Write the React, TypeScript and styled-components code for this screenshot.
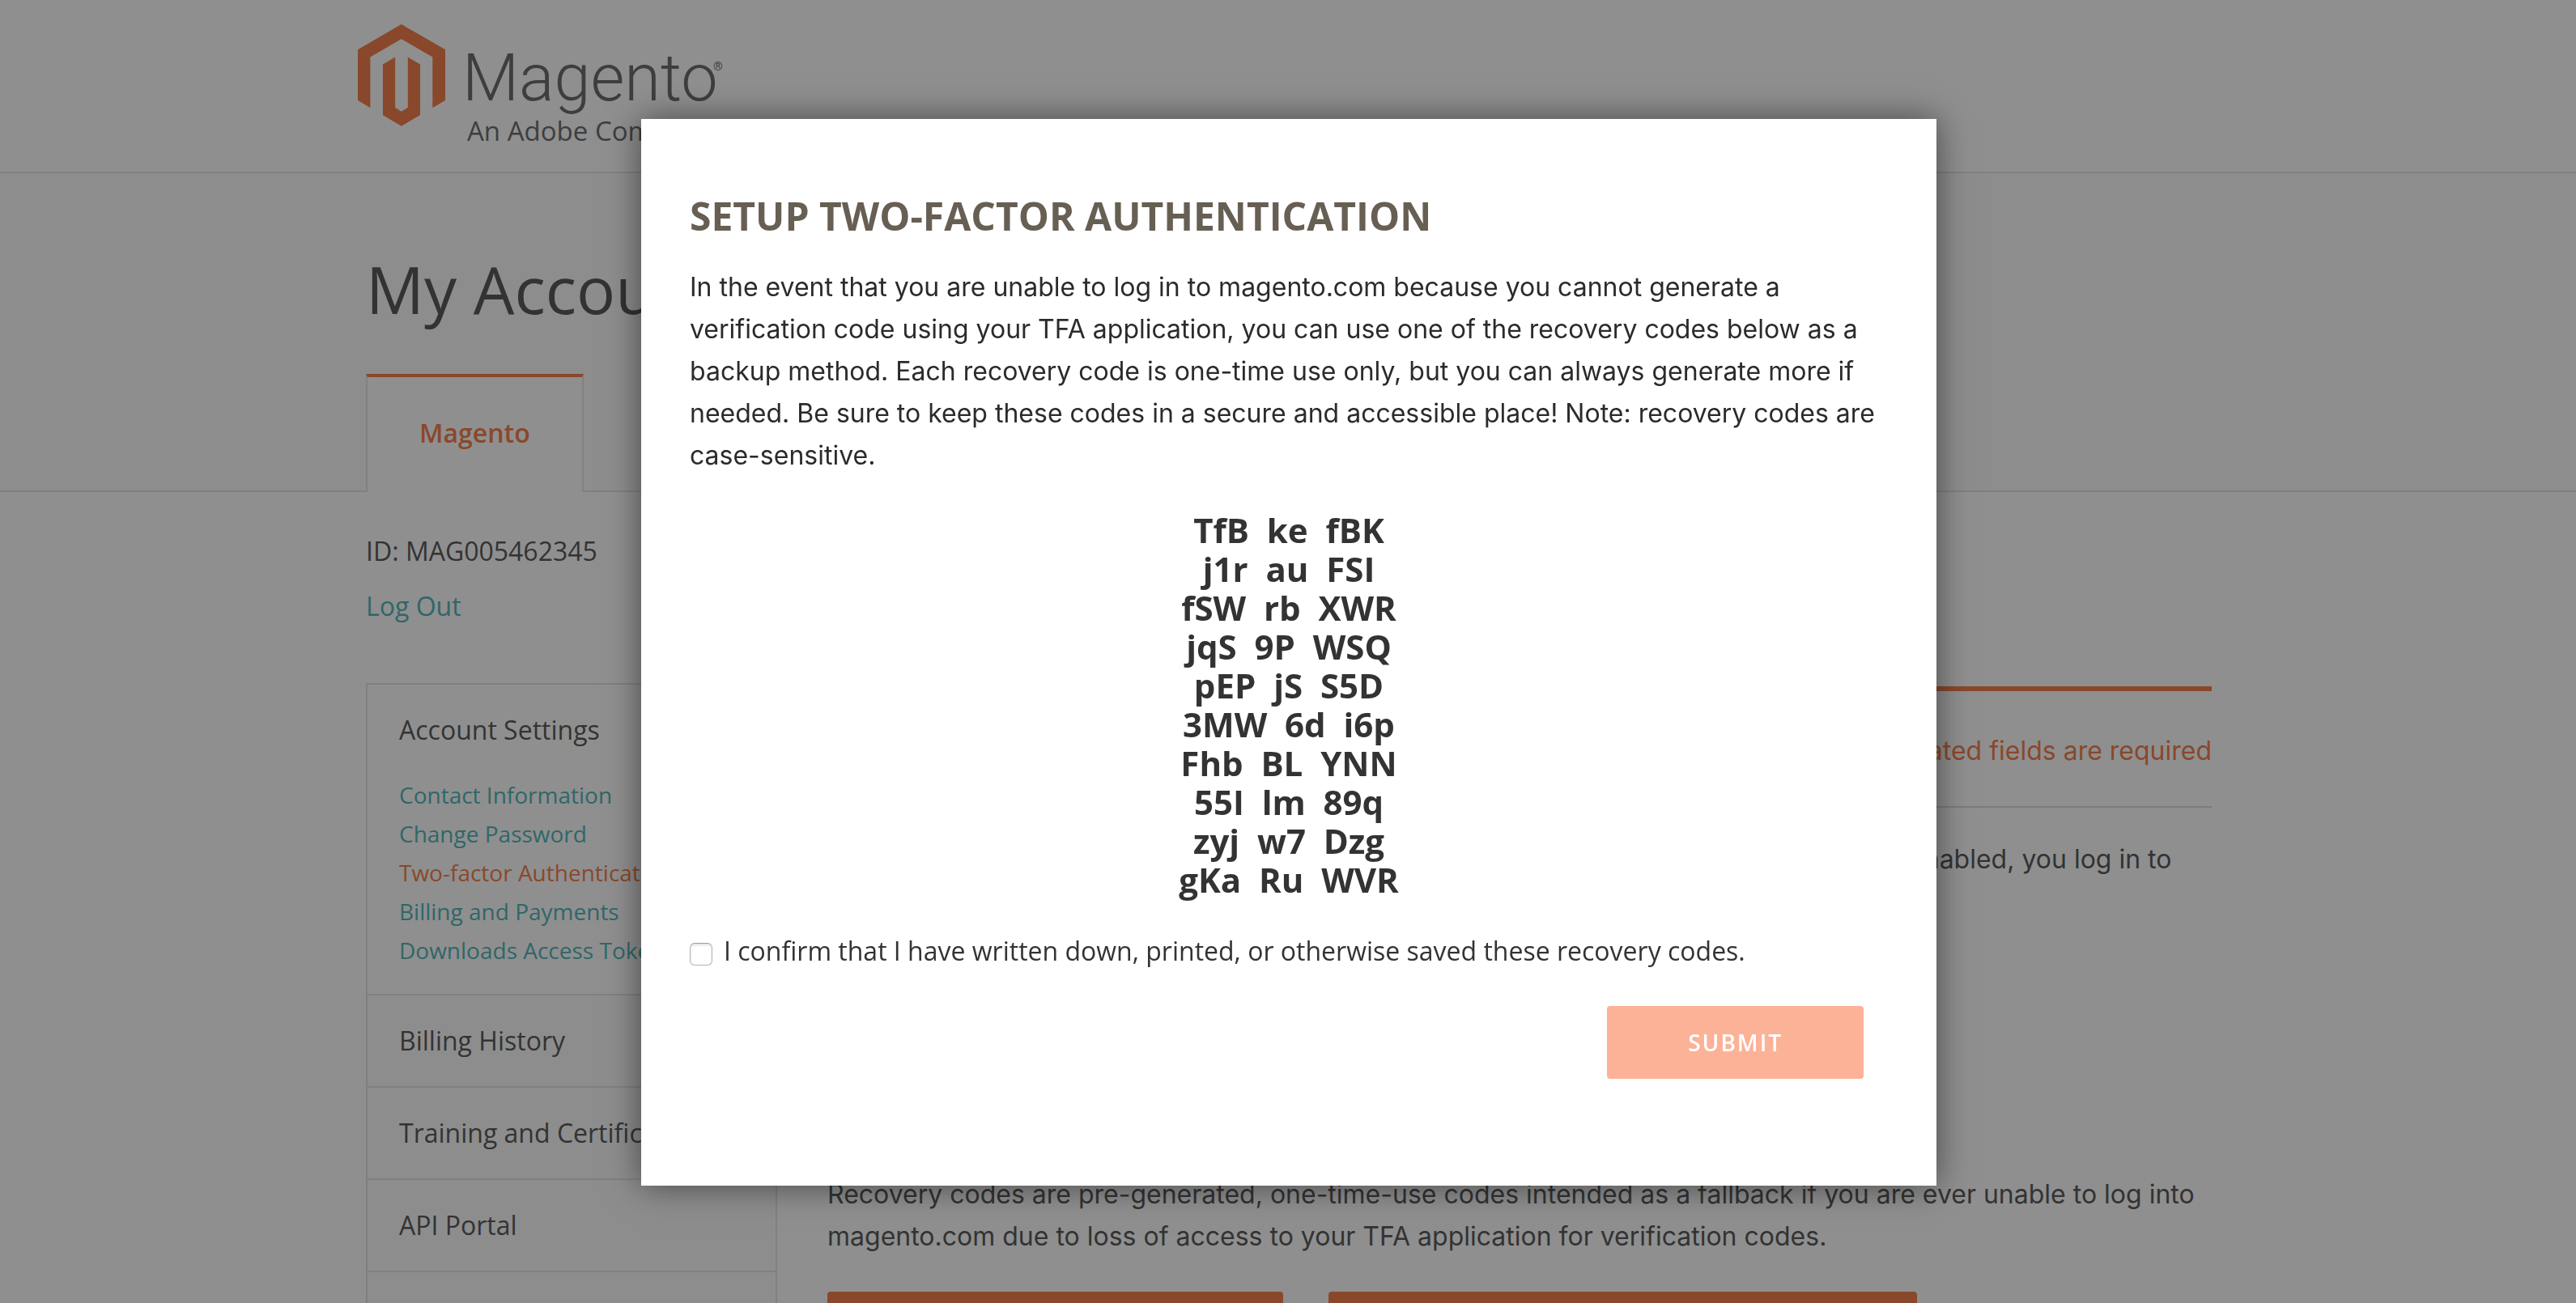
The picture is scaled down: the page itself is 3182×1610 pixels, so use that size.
import React, { useState } from "react";
import styled, { createGlobalStyle } from "styled-components";

const color = {
  orange: "#f26322",
  teal: "#2aa6aa",
  ink: "#333333",
  line: "#dedede",
  panel: "#fafafa",
};

const display = `"Open Sans", "Noto Sans", sans-serif`;
const copy = `Inter, "Liberation Sans", sans-serif`;

const GlobalStyle = createGlobalStyle`
  *, *::before, *::after { box-sizing: border-box; }
  body {
    margin: 0;
    height: 100vh;
    overflow: hidden;
    background: #fff;
    color: ${color.ink};
    font: 400 32px/48px ${display};
  }
  h1, h2, p, ul { margin: 0; padding: 0; }
  ul { list-style: none; }
  a { color: ${color.teal}; text-decoration: none; }
`;

const Page = styled.div`
  height: 100vh;
  overflow: hidden;
  padding-left: 2px;
  background: #fff;
`;

const Container = styled.div`
  width: 100%;
  max-width: 2280px;
  margin: 0 auto;
`;

const Header = styled.header`
  height: 214px;
  padding-top: 30px;
  margin-left: -2px;
  border-bottom: 2px solid ${color.line};
`;

const LogoLink = styled.a`
  display: block;
  margin-left: -9px;
`;

const Hero = styled.section`
  margin-left: -2px;
  padding: 95px 0 0 2px;
  background: ${color.panel};
  border-bottom: 2px solid ${color.line};
`;

const PageTitle = styled.h1`
  font-size: 80px;
  line-height: 96px;
  font-weight: 400;
`;

const Tabs = styled.nav`
  display: flex;
  margin: 57px 0 -2px;
`;

const Tab = styled.a`
  padding: 0 64px 4px;
  border: 2px solid ${color.line};
  border-top: 4px solid ${color.orange};
  border-bottom: 0;
  background: #fff;
  color: ${color.orange};
  font-weight: 600;
  line-height: 138px;
`;

const Identity = styled.div`
  display: grid;
  justify-items: start;
  gap: 20px;
  padding: 49px 0 71px;
`;

const Columns = styled.div`
  display: grid;
  grid-template-columns: 508px minmax(0, 1fr);
  column-gap: 62px;
  align-items: start;
`;

const Sidebar = styled.nav`
  border: 2px solid ${color.line};
  border-bottom: 0;
`;

const SideSection = styled.div<{ $open?: boolean }>`
  padding: 0 39px ${(p) => (p.$open ? 30 : 0)}px;
  background: ${(p) => (p.$open ? "#fff" : color.panel)};
  border-bottom: 2px solid ${color.line};
`;

const SideTitle = styled.a`
  display: block;
  line-height: 112px;
  white-space: nowrap;
  color: ${color.ink};
`;

const SideLink = styled.a<{ $current?: boolean }>`
  display: block;
  font-size: 28px;
  line-height: 48px;
  white-space: nowrap;
  color: ${(p) => (p.$current ? color.orange : color.teal)};
`;

const Main = styled.main`
  margin-top: 4px;
  border-top: 6px solid ${color.orange};
  font: 400 32px/52px ${copy};
`;

const Required = styled.p`
  padding: 48px 0 42px;
  border-bottom: 2px solid #d4d4d4;
  color: ${color.orange};
  text-align: right;
`;

const Intro = styled.p`
  margin: 38px 0 310px;
`;

const Actions = styled.div`
  display: flex;
  gap: 56px;
  margin-top: 42px;
`;

const Button = styled.button<{ $pad?: number }>`
  height: 90px;
  padding: 0 ${(p) => p.$pad ?? 100}px;
  border: 0;
  border-radius: 4px;
  background: ${color.orange};
  color: #fff;
  font: 600 28px/40px ${display};
  letter-spacing: 2px;
  text-transform: uppercase;
  white-space: nowrap;

  &:disabled { background: #fcb297; }
`;

const Overlay = styled.div`
  position: fixed;
  inset: 0;
  padding: 147px 0 0 2px;
  overflow: hidden;
  background: rgba(51, 51, 51, 0.55);
`;

const Dialog = styled.form`
  width: 100%;
  max-width: 1600px;
  margin: 0 auto;
  padding: 88px 60px 132px;
  background: #fff;
  box-shadow: 0 0 40px rgba(0, 0, 0, 0.5);
`;

const DialogTitle = styled.h2`
  color: #675f54;
  font-size: 48px;
  line-height: 64px;
  font-weight: 700;
  text-transform: uppercase;
`;

const DialogText = styled.p`
  margin-top: 30px;
  color: #2b2b2b;
  font: 400 32px/52px ${copy};
`;

const Codes = styled.ul`
  margin-top: 42px;
  font-size: 42px;
  font-weight: 700;
  text-align: center;
  white-space: pre;
`;

const Confirm = styled.label`
  display: flex;
  align-items: flex-start;
  gap: 14px;
  margin-top: 40px;
`;

const Checkbox = styled.input`
  appearance: none;
  flex: none;
  width: 28px;
  height: 28px;
  margin: 14px 0 0;
  border: 1px solid #b4b4b4;
  border-top-color: #9c9c9c;
  border-radius: 6px;
  background: #fff;
  box-shadow: inset 0 2px 3px rgba(0, 0, 0, 0.12);

  &:checked { background: ${color.orange}; }
`;

const DialogActions = styled.div`
  display: flex;
  justify-content: flex-end;
  margin: 44px 30px 0 0;
`;

const codes = [
  ["TfB", "ke", "fBK"],
  ["j1r", "au", "FSI"],
  ["fSW", "rb", "XWR"],
  ["jqS", "9P", "WSQ"],
  ["pEP", "jS", "S5D"],
  ["3MW", "6d", "i6p"],
  ["Fhb", "BL", "YNN"],
  ["55I", "lm", "89q"],
  ["zyj", "w7", "Dzg"],
  ["gKa", "Ru", "WVR"],
];

const settings = [
  "Contact Information",
  "Change Password",
  "Two-factor Authentication",
  "Billing and Payments",
  "Downloads Access Token",
];

const sections = ["Billing History", "Training and Certification", "API Portal", "Partner Portal"];

function Logo() {
  return (
    <svg width="460" height="160" viewBox="0 0 460 160" role="img" aria-label="Magento, An Adobe Company">
      <g fill={color.orange}>
        <path d="M53.8 0 108 31.2V94l-15.700 9.200V40.500L53.800 18.200 15.400 40.500v62.700L0 94V31.200Z" />
        <path d="M30.900 49.500 46.200 40.500v62.600l7.600 4.600 8-4.600V40.500L77 49.500v62.700l-23.200 13.500-22.900-13.500Z" />
      </g>
      <g fill="#4d4d4d">
        <text x="129" y="94" fontFamily="Roboto" fontWeight="300" fontSize="81">Magento</text>
        <text x="439" y="57" fontFamily="Roboto" fontSize="15">®</text>
        <text x="135" y="144" fontFamily="Open Sans" fontSize="33">An Adobe Company</text>
      </g>
    </svg>
  );
}

export default function App() {
  const [saved, setSaved] = useState(false);

  return (
    <>
      <GlobalStyle />
      <Page>
        <Header>
          <Container>
            <LogoLink href="#home"><Logo /></LogoLink>
          </Container>
        </Header>
        <Hero>
          <Container>
            <PageTitle>My Account</PageTitle>
            <Tabs><Tab href="#magento">Magento</Tab></Tabs>
          </Container>
        </Hero>
        <Container>
          <Identity>
            <span>ID: MAG005462345</span>
            <a href="#logout">Log Out</a>
          </Identity>
          <Columns>
            <Sidebar>
              <SideSection $open>
                <SideTitle href="#settings">Account Settings</SideTitle>
                {settings.map((name, i) => (
                  <SideLink key={name} href={`#setting-${i}`} $current={i === 2}>{name}</SideLink>
                ))}
              </SideSection>
              {sections.map((name, i) => (
                <SideSection key={name}>
                  <SideTitle href={`#section-${i}`}>{name}</SideTitle>
                </SideSection>
              ))}
            </Sidebar>
            <Main>
              <Required>* Indicated fields are required</Required>
              <Intro>
                Two-factor authentication adds a second step to sign-in. With two-factor authentication enabled, you log in to
                magento.com with your password and a verification code.
              </Intro>
              <p>
                Recovery codes are pre-generated, one-time-use codes intended as a fallback if you are ever unable to log into
                magento.com due to loss of access to your TFA application for verification codes.
              </p>
              <Actions>
                <Button $pad={105}>View Recovery Codes</Button>
                <Button $pad={107}>Generate New Recovery Codes</Button>
              </Actions>
            </Main>
          </Columns>
        </Container>
      </Page>

      <Overlay>
        <Dialog role="dialog" aria-modal="true" aria-labelledby="tfa-title" onSubmit={(e) => e.preventDefault()}>
          <DialogTitle id="tfa-title">Setup Two-Factor Authentication</DialogTitle>
          <DialogText>
            In the event that you are unable to log in to magento.com because you cannot generate a verification code
            using your TFA application, you can use one of the recovery codes below as a backup method. Each recovery
            code is one-time use only, but you can always generate more if needed. Be sure to keep these codes in a
            secure and accessible place! Note: recovery codes are case-sensitive.
          </DialogText>
          <Codes>
            {codes.map((c) => <li key={c[0]}>{c.join("  ")}</li>)}
          </Codes>
          <Confirm htmlFor="saved">
            <Checkbox id="saved" type="checkbox" checked={saved} onChange={(e) => setSaved(e.target.checked)} />
            I confirm that I have written down, printed, or otherwise saved these recovery codes.
          </Confirm>
          <DialogActions>
            <Button type="submit" disabled={!saved}>Submit</Button>
          </DialogActions>
        </Dialog>
      </Overlay>
    </>
  );
}
